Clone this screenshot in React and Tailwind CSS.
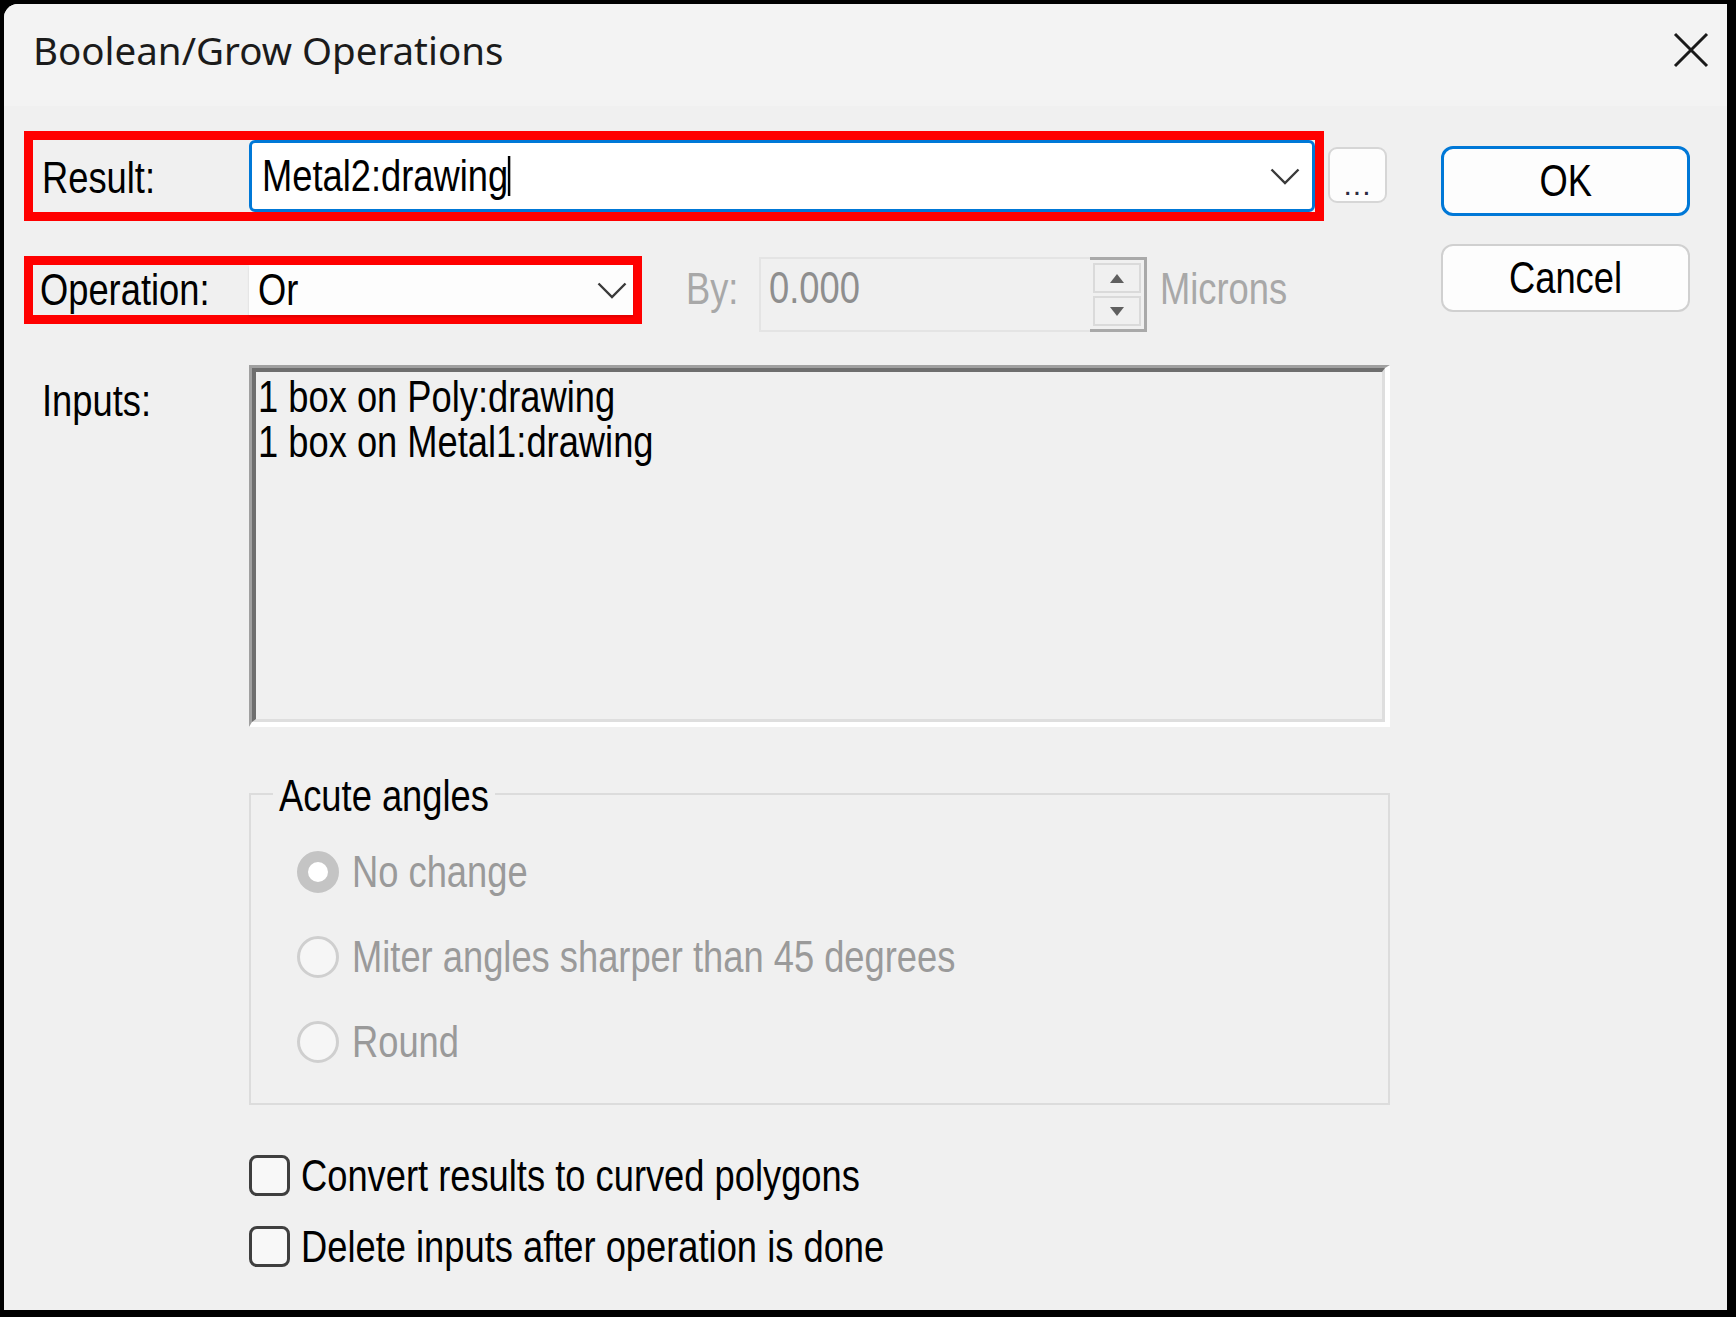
import React from 'react';

// dialog text: the reference font is narrow, so the sans face is squeezed horizontally
const T = ({ className = '', center = false, children }) => (
  <span
    className={`inline-block whitespace-nowrap scale-x-[0.825] font-['Liberation_Sans',Arial,sans-serif] text-[44px] ${center ? 'origin-center' : 'origin-left'} ${className}`}
  >
    {children}
  </span>
);

const Chevron = ({ className }) => (
  <svg className={className} width="30" height="17" viewBox="0 0 30 17" fill="none">
    <polyline points="1.5,1.5 15,15 28.5,1.5" stroke="#3a3a3a" strokeWidth="2.4" />
  </svg>
);

const Radio = ({ checked, label }) => (
  <div className="flex items-center h-[50px]">
    {checked ? (
      <span className="w-[42px] h-[42px] rounded-full border-[11px] border-[#c4c4c4] bg-white" />
    ) : (
      <span className="w-[42px] h-[42px] rounded-full border-[3px] border-[#cfcfcf] bg-[#f6f6f6]" />
    )}
    <T className="ml-[13px] leading-[50px] text-[#9a9a9a]">{label}</T>
  </div>
);

const Check = ({ label }) => (
  <div className="flex items-center h-[41px]">
    <span className="w-[41px] h-[41px] rounded-[8px] border-[3px] border-[#3f3f3f] bg-[#f8f8f8]" />
    <T className="ml-[11px] leading-[50px] text-black">{label}</T>
  </div>
);

export default function App() {
  return (
    <div className="w-[1736px] h-[1317px] bg-black pt-[4px] pl-[4px] pr-[9px] pb-[7px]">
      <div className="h-full flex flex-col bg-[#f0f0f0] rounded-tl-[14px] overflow-hidden">
        {/* title bar */}
        <div className="h-[102px] shrink-0 bg-[#f3f3f3] flex items-center justify-between pl-[29px] pr-[18px]">
          <span className="font-['Segoe_UI','Noto_Sans',sans-serif] text-[38.5px] text-[#1b1b1b] -mt-[9px]">
            Boolean/Grow Operations
          </span>
          <svg width="36" height="36" viewBox="0 0 36 36" className="-mt-[10px]">
            <path d="M2 2 L34 34 M34 2 L2 34" stroke="#1a1a1a" strokeWidth="3" />
          </svg>
        </div>

        {/* body */}
        <div className="flex-1 flex pl-[20px] pt-[25px]">
          <div className="w-[1366px] flex flex-col">
            {/* result row */}
            <div className="flex items-start">
              <div className="w-[1300px] h-[90px] border-[9px] border-[#ff0000] flex items-center">
                <div className="w-[216px] pl-[9px] pt-[3px]">
                  <T className="leading-[50px] text-black">Result:</T>
                </div>
                <div className="flex-1 h-full border-[3px] border-[#0078d7] rounded-[6px] bg-white flex items-center pl-[10px] pr-[12px]">
                  <T className="leading-[50px] text-black">
                    Metal2:drawing
                    <span className="inline-block align-middle w-[3px] h-[40px] -mt-[6px] bg-black" />
                  </T>
                  <Chevron className="ml-auto" />
                </div>
              </div>
              <button className="ml-[4px] mt-[16px] w-[59px] h-[56px] rounded-[9px] border-2 border-[#d6d6d6] bg-[#fdfdfd] flex items-end justify-center pb-[10px]">
                <span className="font-['Liberation_Sans',Arial,sans-serif] text-[30px] leading-[12px] text-[#2a2a40] tracking-[1px]">...</span>
              </button>
            </div>

            {/* operation row */}
            <div className="flex items-start mt-[35px]">
              <div className="w-[618px] h-[68px] border-[9px] border-[#ff0000] flex items-center">
                <div className="w-[216px] pl-[7px]">
                  <T className="leading-[50px] text-black">Operation:</T>
                </div>
                <div className="flex-1 h-full bg-[#fdfdfd] shadow-[0_2px_2px_rgba(0,0,0,0.12)] flex items-center pl-[9px] pr-[6px]">
                  <T className="leading-[50px] text-black">Or</T>
                  <Chevron className="ml-auto" />
                </div>
              </div>
              <div className="flex items-center h-[75px] mt-[1px] ml-[44px]">
                <div className="w-[73px] -mt-[12px]">
                  <T className="leading-[50px] text-[#a8a8a8]">By:</T>
                </div>
                <div className="w-[388px] h-full flex border-2 border-[#e4e4e4] bg-[#f0f0f0]">
                  <div className="flex-1 pl-[8px] pt-[4px]">
                    <T className="leading-[50px] text-[#8e8e8e]">0.000</T>
                  </div>
                  <div className="w-[57px] h-[75px] flex flex-col gap-[3px] p-[3px] border-[3px] border-l-0 border-[#a9a9a9] -my-[2px] -mr-[2px]">
                    <div className="flex-1 border-2 border-[#dadada] flex items-center justify-center">
                      <svg width="14" height="9" viewBox="0 0 14 9"><polygon points="7,0 14,9 0,9" fill="#5f5f5f" /></svg>
                    </div>
                    <div className="flex-1 border-2 border-[#dadada] flex items-center justify-center">
                      <svg width="14" height="9" viewBox="0 0 14 9"><polygon points="0,0 14,0 7,9" fill="#5f5f5f" /></svg>
                    </div>
                  </div>
                </div>
                <div className="ml-[13px] -mt-[12px]">
                  <T className="leading-[50px] text-[#a8a8a8]">Microns</T>
                </div>
              </div>
            </div>

            {/* inputs row */}
            <div className="flex items-start mt-[33px]">
              <div className="w-[225px] pl-[18px] pt-[11px]">
                <T className="leading-[50px] text-black">Inputs:</T>
              </div>
              <div className="w-[1141px] h-[362px] border-t-[3px] border-l-[3px] border-t-[#a0a0a0] border-l-[#a0a0a0] border-b-[5px] border-r-[5px] border-b-white border-r-white">
                <div className="h-full flex flex-col items-start border-t-[4px] border-l-[4px] border-t-[#6e6e6e] border-l-[#6e6e6e] border-b-[3px] border-r-[3px] border-b-[#dedede] border-r-[#dedede] pl-[2px] pt-[2px]">
                  <T className="leading-[45px] text-black">1 box on Poly:drawing</T>
                  <T className="leading-[45px] text-black">1 box on Metal1:drawing</T>
                </div>
              </div>
            </div>

            {/* acute angles group */}
            <fieldset className="ml-[225px] mt-[43px] w-[1141px] h-[335px] border-2 border-[#dcdcdc]">
              <legend className="ml-[22px] px-[6px] w-[222px] h-[48px] overflow-visible">
                <T className="leading-[48px] translate-y-[2px] text-black">Acute angles</T>
              </legend>
              <div className="flex flex-col gap-[35px] mt-[29px] ml-[46px]">
                <Radio checked label="No change" />
                <Radio label="Miter angles sharper than 45 degrees" />
                <Radio label="Round" />
              </div>
            </fieldset>

            {/* checkboxes */}
            <div className="ml-[225px] mt-[50px] flex flex-col gap-[30px]">
              <Check label="Convert results to curved polygons" />
              <Check label="Delete inputs after operation is done" />
            </div>
          </div>

          {/* buttons */}
          <div className="ml-[51px] w-[249px] flex flex-col">
            <button className="mt-[15px] h-[70px] rounded-[12px] border-[3px] border-[#0078d7] bg-[#fdfdfd] flex items-center justify-center">
              <T center className="leading-[50px] text-black">OK</T>
            </button>
            <button className="mt-[28px] h-[68px] rounded-[12px] border-2 border-[#d0d0d0] bg-[#fdfdfd] flex items-center justify-center">
              <T center className="leading-[50px] text-black">Cancel</T>
            </button>
          </div>
        </div>
      </div>
    </div>
  );
}
